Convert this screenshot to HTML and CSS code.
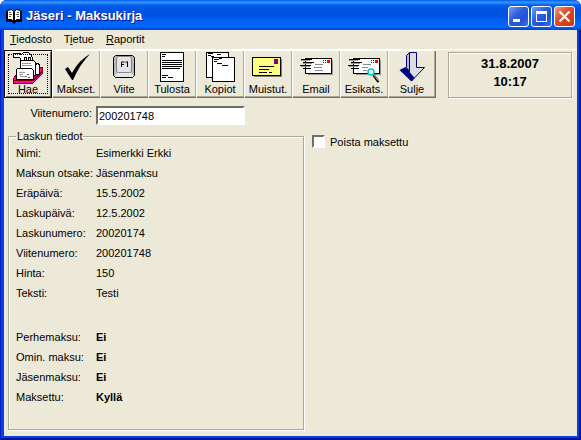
FILE: index.html
```html
<!DOCTYPE html>
<html lang="fi">
<head>
<meta charset="utf-8">
<title>Jäseri - Maksukirja</title>
<link rel="stylesheet" href="styles.css">
</head>
<body>
<div class="window">
  <header class="titlebar">
    <svg class="app-icon" viewBox="0 0 16 16" width="16" height="16" aria-hidden="true">
      <path d="M0 3h2v9h4l2 2 2-2h4V3h2v11h-6l-2 2-2-2H0z" fill="#000"/>
      <path d="M1.500 2.500l4-1 2 2v10l-2-2h-4zM14.500 2.500l-4-1-2 2v10l2-2h4z" fill="#fff" stroke="#000"/>
      <path d="M3 4.500h2M3 6.500h3M3 8.500h2M11 4.500h2M10 6.500h3M11 8.500h2" stroke="#555"/>
    </svg>
    <h1 class="title">Jäseri - Maksukirja</h1>
    <div class="window-buttons">
      <button class="win-btn" type="button" aria-label="Pienennä"><svg viewBox="0 0 19 19"><path d="M4 12h7v3H4z" fill="#fff"/></svg></button>
      <button class="win-btn" type="button" aria-label="Suurenna"><svg viewBox="0 0 19 19"><path d="M4 4h11v11H4zM5 7v7h9V7z" fill="#fff" fill-rule="evenodd"/></svg></button>
      <button class="win-btn close" type="button" aria-label="Sulje ikkuna"><svg viewBox="0 0 19 19"><path d="M4.500 4.500l10 10M14.500 4.500l-10 10" stroke="#fff" stroke-width="2.200"/></svg></button>
    </div>
  </header>
  <div class="client">
    <nav class="menu">
      <a href="#tiedosto"><u>T</u>iedosto</a>
      <a href="#tietue">T<u>i</u>etue</a>
      <a href="#raportit"><u>R</u>aportit</a>
    </nav>
    <div class="toolbar">
      <div class="tools">
        <button class="tool active" type="button">
          <svg viewBox="4 50 48 34" shape-rendering="crispEdges">
            <path d="M13 80l4-7 20-1 2-5h3v7l-9 9H13z" fill="#f0a" stroke="#800000"/>
            <path d="M14 80.500h19l9-9" fill="none" stroke="#800000"/>
            <path d="M35.500 65.500l1-2h2l1 2v9h-4z" fill="#fff" stroke="#000"/>
            <path d="M20.500 60.500h13l2 2v13h-15z" fill="#fff" stroke="#000"/>
            <path d="M16.500 69.500l1-1h14l2 2v9h-17z" fill="#fff" stroke="#000"/>
            <path d="M22 63.500h9M22 65.500h10M19 72.500h6M19 74.500h4M20 76.500h7" stroke="#999"/>
            <path d="M27 74.500h2M26 76.500h1M28 77.500h2" stroke="#555"/>
            <path d="M13.500 53.500h6l2 1 2-2h5l2 2 2 3v3h-2v-3h-2v3h-2v-3h-2v3h-3l-2-3h-6z" fill="#fff" stroke="#000"/>
          </svg><span>Hae</span></button>
        <button class="tool" type="button">
          <svg viewBox="52 50 48 34"><path d="M65 69l3-2 4 6q7-13 18-19-10 10-17 26h-1z"/></svg><span>Makset.</span></button>
        <button class="tool" type="button">
          <svg viewBox="100 50 48 34">
            <path d="M115.500 55.500h17l2 2v18l-2 2h-17l-2-2v-18z" fill="#b8b8b8" stroke="#000"/>
            <path d="M115 75l3-3h12l4 4-2 1h-16z" fill="#e8e8e8"/>
            <rect x="116.500" y="56.500" width="15" height="16" rx="2" fill="#e4e4e4" stroke="#888"/>
            <path d="M121.500 67v-5h3M122 64.500h2M125.500 62.500l2-1v5.500" fill="none" stroke="#000"/>
          </svg><span>Viite</span></button>
        <button class="tool" type="button">
          <svg viewBox="148 50 48 34" shape-rendering="crispEdges">
            <path d="M160.500 52.500h23v29h-23z" fill="#fff" stroke="#000"/>
            <path d="M162 54.500h4M162 56.500h3M162 60.500h20M162 62.500h20M162 64.500h20M162 66.500h20M162 68.500h18M162 75.500h6M162 77.500h4M168 77.500h5" stroke="#000"/>
          </svg><span>Tulosta</span></button>
        <button class="tool" type="button">
          <svg viewBox="196 50 48 34" shape-rendering="crispEdges">
            <path d="M206.500 52.500h22v25h-22z" fill="#fff" stroke="#000"/>
            <path d="M208 53.500h5M208 55.500h3M211 56.500h3M217 54.500h4" stroke="#000"/>
            <path d="M212.500 57.500h22v24h-22z" fill="#fff" stroke="#000"/>
            <path d="M214 59.500h5M219 58.500h3M214 61.500h3M217 63.500h5M222 65.500h6" stroke="#000"/>
          </svg><span>Kopiot</span></button>
        <button class="tool" type="button">
          <svg viewBox="244 50 48 34" shape-rendering="crispEdges">
            <path d="M254 59h28v18h-28z" fill="#808080"/>
            <path d="M252.500 57.500h28v18h-28z" fill="#ffff80" stroke="#000"/>
            <path d="M274 59h4v5h-4z" fill="#800080"/>
            <path d="M259 66.500h15M259 69.500h10M259 72.500h8M269 72.500h3" stroke="#000"/>
          </svg><span>Muistut.</span></button>
        <button class="tool" type="button">
          <svg viewBox="292 50 48 34" shape-rendering="crispEdges">
            <path d="M308 60h25v15h-25z" fill="#999"/>
            <path d="M305.500 58.500h26v15h-26z" fill="#fff" stroke="#000"/>
            <path d="M301 59.500h11M303 62.500h11M300 65.500h11M303 68.500h8" stroke="#000"/>
            <path d="M301 60.500h9M303 63.500h9M301 66.500h9" stroke="#999"/>
            <path d="M315 64.500h8M314 67.500h8M315 70.500h8" stroke="#888"/>
            <path d="M323 60.500h3M323 62.500h3" stroke="#800000" stroke-dasharray="1 1"/><path d="M327 60h3v3h-3z" fill="#f00"/>
          </svg><span>Email</span></button>
        <button class="tool" type="button">
          <svg viewBox="340 50 48 34">
            <g shape-rendering="crispEdges">
            <path d="M356 60h25v15h-25z" fill="#999"/>
            <path d="M353.500 58.500h26v15h-26z" fill="#fff" stroke="#000"/>
            <path d="M349 59.500h11M351 62.500h11M348 65.500h11M351 68.500h8" stroke="#000"/>
            <path d="M349 60.500h9M351 63.500h9M349 66.500h9" stroke="#999"/>
            <path d="M363 64.500h8M362 67.500h6M363 70.500h4" stroke="#888"/>
            <path d="M371 60.500h3M371 62.500h3" stroke="#800000" stroke-dasharray="1 1"/><path d="M375 60h3v3h-3z" fill="#f00"/>
            </g>
            <path d="M373.500 75l5 7" stroke="#000" stroke-width="2.500"/><path d="M374 75l4.500 6" stroke="#ccc"/>
            <circle cx="371" cy="72" r="3" fill="#dff" stroke="#0cc" stroke-width="1.500"/>
          </svg><span>Esikats.</span></button>
        <button class="tool" type="button">
          <svg viewBox="388 50 48 34">
            <path d="M409.500 52.500h7v15h8l-13 13.500-4-12h2z" fill="#dcdce4" stroke="#000080"/>
            <path d="M399.500 70l6-3 9 11-3 3.500z" fill="#000080"/>
            <path d="M409.500 52.500l-3 3v12l3 4z" fill="#b8b8cc" stroke="#000080"/>
          </svg><span>Sulje</span></button>
      </div>
      <div class="clock"><time>31.8.2007</time><time>10:17</time></div>
    </div>
    <main class="content">
      <div class="search">
        <label for="viite">Viitenumero:</label>
        <input id="viite" type="text" value="200201748">
      </div>
      <div class="panels">
        <fieldset class="details">
          <legend>Laskun tiedot</legend>
          <dl>
            <dt>Nimi:</dt><dd>Esimerkki Erkki</dd>
            <dt>Maksun otsake:</dt><dd>Jäsenmaksu</dd>
            <dt>Eräpäivä:</dt><dd>15.5.2002</dd>
            <dt>Laskupäivä:</dt><dd>12.5.2002</dd>
            <dt>Laskunumero:</dt><dd>20020174</dd>
            <dt>Viitenumero:</dt><dd>200201748</dd>
            <dt>Hinta:</dt><dd>150</dd>
            <dt>Teksti:</dt><dd>Testi</dd>
          </dl>
          <dl class="status">
            <dt>Perhemaksu:</dt><dd>Ei</dd>
            <dt>Omin. maksu:</dt><dd>Ei</dd>
            <dt>Jäsenmaksu:</dt><dd>Ei</dd>
            <dt>Maksettu:</dt><dd>Kyllä</dd>
          </dl>
        </fieldset>
        <label class="check"><input type="checkbox"> Poista maksettu</label>
      </div>
    </main>
  </div>
</div>
</body>
</html>
```

FILE: styles.css
```css
* { box-sizing: border-box; }

body {
  margin: 0;
  background: #fff;
  color: #000;
  font: 11px/14px "Liberation Sans", Arial, sans-serif;
}

.window {
  display: flex;
  flex-direction: column;
  min-height: 100vh;
  padding: 0 4px 4px;
  border-radius: 7px 7px 0 0;
  background: #0842dc;
  box-shadow: inset 1px 0 #0019cf, inset -2px -2px #00139c;
}

.titlebar {
  display: flex;
  align-items: center;
  height: 30px;
  margin: 0 -4px;
  padding: 2px 6px 0;
  border-radius: 7px 7px 0 0;
  background: linear-gradient(#0058ee 0, #3593ff 2px, #288eff 3px, #0560e8 5px, #0053e1 9px, #0055e5 16px, #0066ff 24px, #0063f5 27px, #0043cf 30px);
}

.title {
  flex: 1;
  margin: 0 0 0 4px;
  color: #fff;
  font: bold 13px/16px "Liberation Sans", Arial, sans-serif;
  text-shadow: 1px 1px #0f1089;
}

.window-buttons { display: flex; gap: 2px; }

.win-btn {
  width: 21px;
  height: 21px;
  padding: 0;
  border: 1px solid #fff;
  border-radius: 3px;
  background: linear-gradient(135deg, #7a9df5, #2f5fe0 40%, #2050d8 70%, #3a78f0);
}

.win-btn svg { display: block; width: 19px; height: 19px; }

.close { background: linear-gradient(135deg, #f0a088, #e05030 40%, #d03c14 80%, #c04020); }

.client {
  flex: 1;
  display: flex;
  flex-direction: column;
  background: #ece9d8;
}

.menu {
  display: flex;
  gap: 12px;
  height: 19px;
  padding: 2px 6px 0;
}

.menu a { color: #000; text-decoration: none; }

.toolbar {
  display: flex;
  gap: 12px;
  padding-right: 5px;
  border-top: 1px solid #fff;
}

.tools { display: flex; }

.tool {
  display: flex;
  flex-direction: column;
  align-items: center;
  width: 48px;
  height: 48px;
  padding: 0;
  border: 0;
  background: #ece9d8;
  box-shadow: inset 1px 1px #fff, inset 0 -1px #716f64, inset -1px -2px #aca899;
  color: #000;
  font: inherit;
}

.tool:last-child { box-shadow: inset 1px 1px #fff, inset -1px -1px #716f64, inset -2px -2px #aca899; }

.tool svg { display: block; flex: none; width: 48px; height: 34px; }
.tool span { margin-top: -2px; }

.tool.active {
  box-shadow: inset 0 0 0 1px #200008, inset 2px 2px #fff, inset -2px -2px #716f64;
  outline: 1px dotted #000;
  outline-offset: -5px;
}

.clock {
  flex: 1;
  display: flex;
  flex-direction: column;
  align-items: center;
  height: 46px;
  margin-top: 2px;
  padding-top: 2px;
  border: 1px solid #aca899;
  box-shadow: inset 1px 1px #fff, 1px 1px #fff;
  font: bold 13px/18px "Liberation Sans", Arial, sans-serif;
}

.content {
  flex: 1;
  display: flex;
  flex-direction: column;
  padding: 8px 4px 6px;
}

.search {
  display: flex;
  gap: 4px;
}

.search label { width: 84px; text-align: right; }

.search input {
  width: 149px;
  height: 19px;
  padding: 1px 1px 0;
  border: 2px solid;
  border-color: #716f64 #fff #fff #716f64;
  background: #fff;
  font: inherit;
}

.panels {
  flex: 1;
  display: flex;
  gap: 8px;
  margin-top: 4px;
}

.details {
  flex: 0 0 296px;
  margin: 0;
  padding: 0 7px;
  border: 1px solid #aca899;
  box-shadow: 1px 1px #fff, inset 1px 1px #fff;
}

.details legend { padding: 0 1px; }

.details dl {
  display: grid;
  grid-template-columns: 80px 1fr;
  line-height: 20px;
  margin: 0;
}

.details dd { margin: 0; }
.details .status { margin-top: 24px; }
.status dd { font-weight: bold; }

.check {
  display: flex;
  gap: 5px;
  height: 14px;
  margin-top: 6px;
}

.check input {
  appearance: none;
  width: 13px;
  height: 13px;
  margin: 0;
  border: 2px solid;
  border-color: #716f64 #fff #fff #716f64;
  background: #fff;
}
```
